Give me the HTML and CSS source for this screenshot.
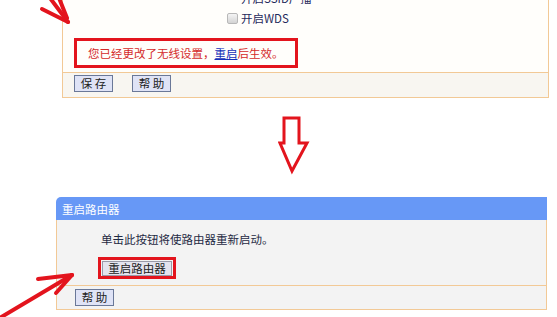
FILE: index.html
```html
<!DOCTYPE html>
<html>
<head>
<meta charset="utf-8">
<link rel="stylesheet" href="styles.css">
</head>
<body>
<div class="page">
  <div class="panel panel-top">
    <div class="p-body">
      <div class="row row-cut"><span class="row-text">开启SSID广播</span></div>
      <div class="row row-wds"><span class="chk"></span><span class="row-text">开启WDS</span></div>
      <div class="notice-wrap">
        <div class="notice">您已经更改了无线设置，<a class="link">重启</a>后生效。</div>
      </div>
    </div>
    <div class="p-foot">
      <span class="btn">保 存</span>
      <span class="btn btn-gap">帮 助</span>
    </div>
  </div>

  <div class="mid-arrow">
    <svg width="32" height="60" viewBox="0 0 32 60">
      <polygon points="6,2 21,2 21,27 29,27 14,55 2,27 6,27" fill="#fff" stroke="#e3141d" stroke-width="3" stroke-linejoin="miter"/>
    </svg>
  </div>

  <div class="panel panel-bottom">
    <div class="p-head">重启路由器</div>
    <div class="p-body grey">
      <div class="desc">单击此按钮将使路由器重新启动。</div>
      <div class="reboot-box"><span class="btn btn-reboot">重启路由器</span></div>
    </div>
    <div class="p-foot grey">
      <span class="btn">帮 助</span>
    </div>
  </div>

  <svg class="hand hand-top" width="80" height="30" viewBox="0 0 80 30">
    <g stroke="#e3141d" stroke-width="4" stroke-linecap="round" fill="none">
      <line x1="42" y1="9" x2="68" y2="22"/>
      <line x1="50" y1="-2" x2="68" y2="22"/>
      <line x1="59" y1="-2" x2="67" y2="18"/>
    </g>
  </svg>
  <svg class="hand hand-bottom" width="80" height="50" viewBox="0 0 80 50">
    <g stroke="#e3141d" stroke-width="4" stroke-linecap="round" fill="none">
      <line x1="-2" y1="52" x2="72" y2="8"/>
      <line x1="38" y1="12" x2="72" y2="8"/>
      <line x1="56" y1="26" x2="72" y2="8"/>
    </g>
  </svg>
</div>
</body>
</html>
```

FILE: styles.css
```css
* { box-sizing: border-box; }
html, body {
  margin: 0;
  padding: 0;
  background: #fff;
  overflow: hidden;
}
body {
  font-family: "Noto Sans CJK SC", "Noto Sans", sans-serif;
  font-size: 11.5px;
  color: #1f2a44;
  width: 557px;
  height: 317px;
}
.page {
  position: relative;
  width: 557px;
  height: 317px;
  overflow: hidden;
}
.panel {
  display: flex;
  flex-direction: column;
}
.panel-top {
  margin-top: -10px;
  margin-left: 62px;
  width: 487px;
}
.p-body {
  border-left: 1px solid #f2c996;
  border-right: 1px solid #f2c996;
  background: #fffefb;
}
.p-foot {
  border: 1px solid #f2c996;
  background: #f8f6f1;
  height: 26px;
  padding: 2px 0 0 11px;
  display: flex;
  align-items: flex-start;
}
.row {
  display: flex;
  align-items: center;
  padding-left: 164px;
}
.row-cut {
  height: 16px;
  padding-left: 178px;
}
.row-wds {
  height: 24px;
}
.chk {
  width: 11px;
  height: 11px;
  border: 1px solid #b8b8b8;
  border-radius: 2px;
  background: linear-gradient(#f4f4f4, #d4d4d4);
  margin-right: 3px;
}
.row-text {
  line-height: 16px;
  color: #1f2a5c;
}
.notice-wrap {
  padding: 8px 0 4px 11px;
}
.notice {
  width: 224px;
  height: 30px;
  border: 3px solid #e3141d;
  padding-left: 11px;
  display: flex;
  align-items: center;
  color: #d42a2a;
  white-space: nowrap;
}
.link {
  color: #1530b8;
  text-decoration: underline;
}
.btn {
  display: inline-flex;
  align-items: center;
  justify-content: center;
  height: 17px;
  width: 39px;
  border: 1px solid #6a7898;
  background: #dfe3f6;
  color: #222;
  font-size: 11.5px;
  line-height: 15px;
  white-space: nowrap;
}
.btn-gap {
  margin-left: 19px;
}
.mid-arrow {
  height: 99px;
  padding: 18px 0 0 278px;
}
.mid-arrow svg { display: block; }
.panel-bottom {
  margin-left: 56px;
  width: 491px;
}
.p-head {
  height: 23px;
  background: #6798f6;
  color: #fff;
  border-radius: 5px 0 0 0;
  padding-left: 6px;
  display: flex;
  align-items: center;
}
.grey {
  background: #f3f3f3;
}
.panel-bottom .p-body {
  height: 65px;
  padding: 10px 0 0 44px;
}
.desc {
  line-height: 18px;
}
.reboot-box {
  margin-top: 9px;
  margin-left: -3px;
  width: 78px;
  height: 22px;
  border: 3px solid #e3141d;
  display: flex;
  align-items: center;
  justify-content: center;
}
.btn-reboot {
  width: 70px;
  height: 15px;
  background: #e4e4ee;
  border: 1px solid #9a9aa8;
}
.panel-bottom .p-foot {
  height: 25px;
  padding: 3px 0 0 18px;
}
.hand {
  position: absolute;
  display: block;
}
.hand-top {
  left: 0;
  top: 0;
}
.hand-bottom {
  left: 0;
  top: 267px;
}
```
